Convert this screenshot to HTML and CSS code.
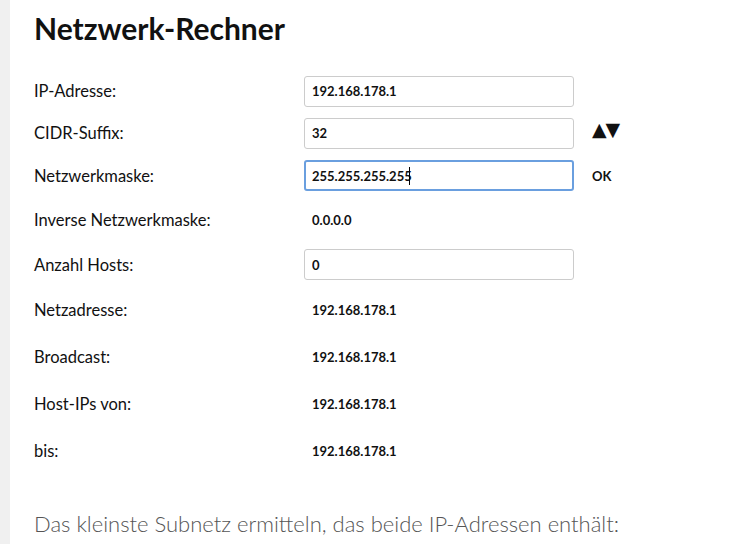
FILE: index.html
```html
<!DOCTYPE html>
<html lang="de">
<head>
    <meta charset="UTF-8">
    <meta name="viewport" content="width=device-width, initial-scale=1.0">
    <title>Netzwerk-Rechner</title>
    <link rel="stylesheet" href="styles.css">
</head>
<body>
    <div class="sidebar"></div>
    <main class="content">
        <h1>Netzwerk-Rechner</h1>

        <div class="calc">
            <label class="label" for="ip">IP-Adresse:</label>
            <div class="field"><input class="input" id="ip" type="text" value="192.168.178.1"></div>
            <div class="extra"></div>

            <label class="label" for="cidr">CIDR-Suffix:</label>
            <div class="field"><input class="input" id="cidr" type="text" value="32"></div>
            <div class="extra arrows">▲▼</div>

            <label class="label" for="mask">Netzwerkmaske:</label>
            <div class="field caret-wrap">
                <input class="input focused" id="mask" type="text" value="255.255.255.255">
                <span class="caret"></span>
            </div>
            <div class="extra ok">OK</div>

            <div class="label">Inverse Netzwerkmaske:</div>
            <div class="value">0.0.0.0</div>
            <div class="extra"></div>

            <label class="label" for="hosts">Anzahl Hosts:</label>
            <div class="field"><input class="input" id="hosts" type="text" value="0"></div>
            <div class="extra"></div>

            <div class="label">Netzadresse:</div>
            <div class="value">192.168.178.1</div>
            <div class="extra"></div>

            <div class="label">Broadcast:</div>
            <div class="value">192.168.178.1</div>
            <div class="extra"></div>

            <div class="label">Host-IPs von:</div>
            <div class="value">192.168.178.1</div>
            <div class="extra"></div>

            <div class="label">bis:</div>
            <div class="value">192.168.178.1</div>
            <div class="extra"></div>
        </div>

        <p class="lead">Das kleinste Subnetz ermitteln, das beide IP-Adressen enthält:</p>
    </main>
</body>
</html>
```

FILE: styles.css
```css
/* Grundlayout */
* {
    margin: 0;
    padding: 0;
    box-sizing: border-box;
}

body {
    font-family: 'Lato', 'Open Sans', sans-serif;
    color: #111;
    background: #fff;
    display: flex;
    min-height: 100vh;
    overflow: hidden;
}

.sidebar {
    width: 10px;
    flex-shrink: 0;
    background: #f0f0f0;
}

.content {
    padding: 10px 0 0 24px;
    flex: 1;
}

h1 {
    font-size: 30px;
    font-weight: 700;
    line-height: 36px;
    color: #111;
}

/* Rechner-Tabelle */
.calc {
    margin-top: 24px;
    display: grid;
    grid-template-columns: 270px 288px auto;
    grid-template-rows: 42px 42px 43px 46px 43px 47px 47px 47px 47px;
    align-items: center;
}

.label {
    font-size: 16.5px;
    color: #111;
}

.field {
    display: flex;
    align-items: center;
}

.input {
    width: 270px;
    height: 31px;
    border: 1px solid #ccc;
    border-radius: 3px;
    padding: 0 7px;
    font-family: inherit;
    font-size: 13px;
    font-weight: 700;
    color: #111;
    background: #fff;
    outline: none;
}

.input.focused {
    border: 2px solid #6a9fdf;
    padding: 0 6px;
}

.caret-wrap {
    position: relative;
}

.caret {
    position: absolute;
    left: 105px;
    top: 7px;
    width: 1px;
    height: 18px;
    background: #000;
}

.value {
    font-size: 13px;
    font-weight: 700;
    padding-left: 8px;
}

.extra {
    font-size: 13px;
    font-weight: 700;
}

.arrows {
    font-family: 'DejaVu Sans', sans-serif;
    font-size: 19px;
    margin-top: -8px;
    letter-spacing: -1px;
}

.lead {
    margin-top: 36px;
    font-size: 22px;
    font-weight: 300;
    color: #555;
}
```
